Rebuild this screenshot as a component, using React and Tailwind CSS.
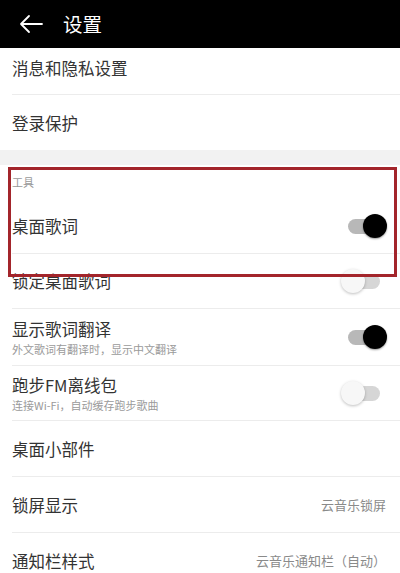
import React from "react";

const font = { fontFamily: '"Noto Sans CJK SC", "Noto Sans", sans-serif' };

function Toggle({ on }) {
  return (
    <div className="relative w-[40px] h-[26px] flex items-center">
      <div className={`absolute left-[2px] w-[32px] h-[15px] rounded-full ${on ? "bg-[#b8b8b8]" : "bg-[#d6d6d6]"}`} />
      {on ? (
        <div className="absolute right-[-1px] w-[24px] h-[24px] rounded-full bg-black shadow-[0_1px_2px_rgba(0,0,0,0.4)]" />
      ) : (
        <div className="absolute left-[-5px] w-[24px] h-[24px] rounded-full bg-[#f7f7f7] shadow-[0_1px_3px_rgba(0,0,0,0.25)]" />
      )}
    </div>
  );
}

function Row({ title, sub, right, toggle, h = "h-[55px]", divider = true, extra = "" }) {
  return (
    <div className={`${h} ml-[12px] flex items-center pr-[14px] ${divider ? "border-b border-[#ececec]" : ""} ${extra}`}>
      <div className="flex-1 flex flex-col">
        <div className="text-[16.5px] text-[#333] leading-[22px]">{title}</div>
        {sub && <div className="text-[11px] text-[#9a9a9a] leading-[16px] mt-[1px]">{sub}</div>}
      </div>
      {right && <div className="text-[13px] text-[#8a8a8a]">{right}</div>}
      {toggle !== undefined && <Toggle on={toggle} />}
    </div>
  );
}

export default function App() {
  return (
    <div className="relative w-[400px] h-[573px] overflow-hidden bg-white" style={font}>
      <div className="h-[48px] bg-black flex items-center pl-[19px]">
        <svg width="25" height="20" viewBox="0 0 25 20" fill="none" stroke="white" strokeWidth="1.8" strokeLinecap="round" strokeLinejoin="round">
          <path d="M23 10H2M10 2L2 10l8 8" />
        </svg>
        <div className="ml-[19px] text-white text-[19.5px]">设置</div>
      </div>
      <Row title="消息和隐私设置" h="h-[47px]" extra="pb-[6px]" />
      <Row title="登录保护" h="h-[55px]" divider={false} />
      <div className="h-[15px] bg-[#f2f2f2]" />
      <div className="h-[34px] flex items-center pl-[12px] text-[11px] text-[#999]">工具</div>
      <Row title="桌面歌词" toggle={true} h="h-[55px]" />
      <Row title="锁定桌面歌词" toggle={false} h="h-[55px]" />
      <Row title="显示歌词翻译" sub="外文歌词有翻译时，显示中文翻译" toggle={true} h="h-[57px]" />
      <Row title="跑步FM离线包" sub="连接Wi-Fi，自动缓存跑步歌曲" toggle={false} h="h-[55px]" />
      <Row title="桌面小部件" h="h-[56px]" />
      <Row title="锁屏显示" right="云音乐锁屏" h="h-[56px]" />
      <Row title="通知栏样式" right="云音乐通知栏（自动）" h="h-[56px]" divider={false} />
      <div className="absolute left-[8px] top-[167px] w-[389px] h-[110px] border-[3px] border-[#a3252b]" />
    </div>
  );
}
